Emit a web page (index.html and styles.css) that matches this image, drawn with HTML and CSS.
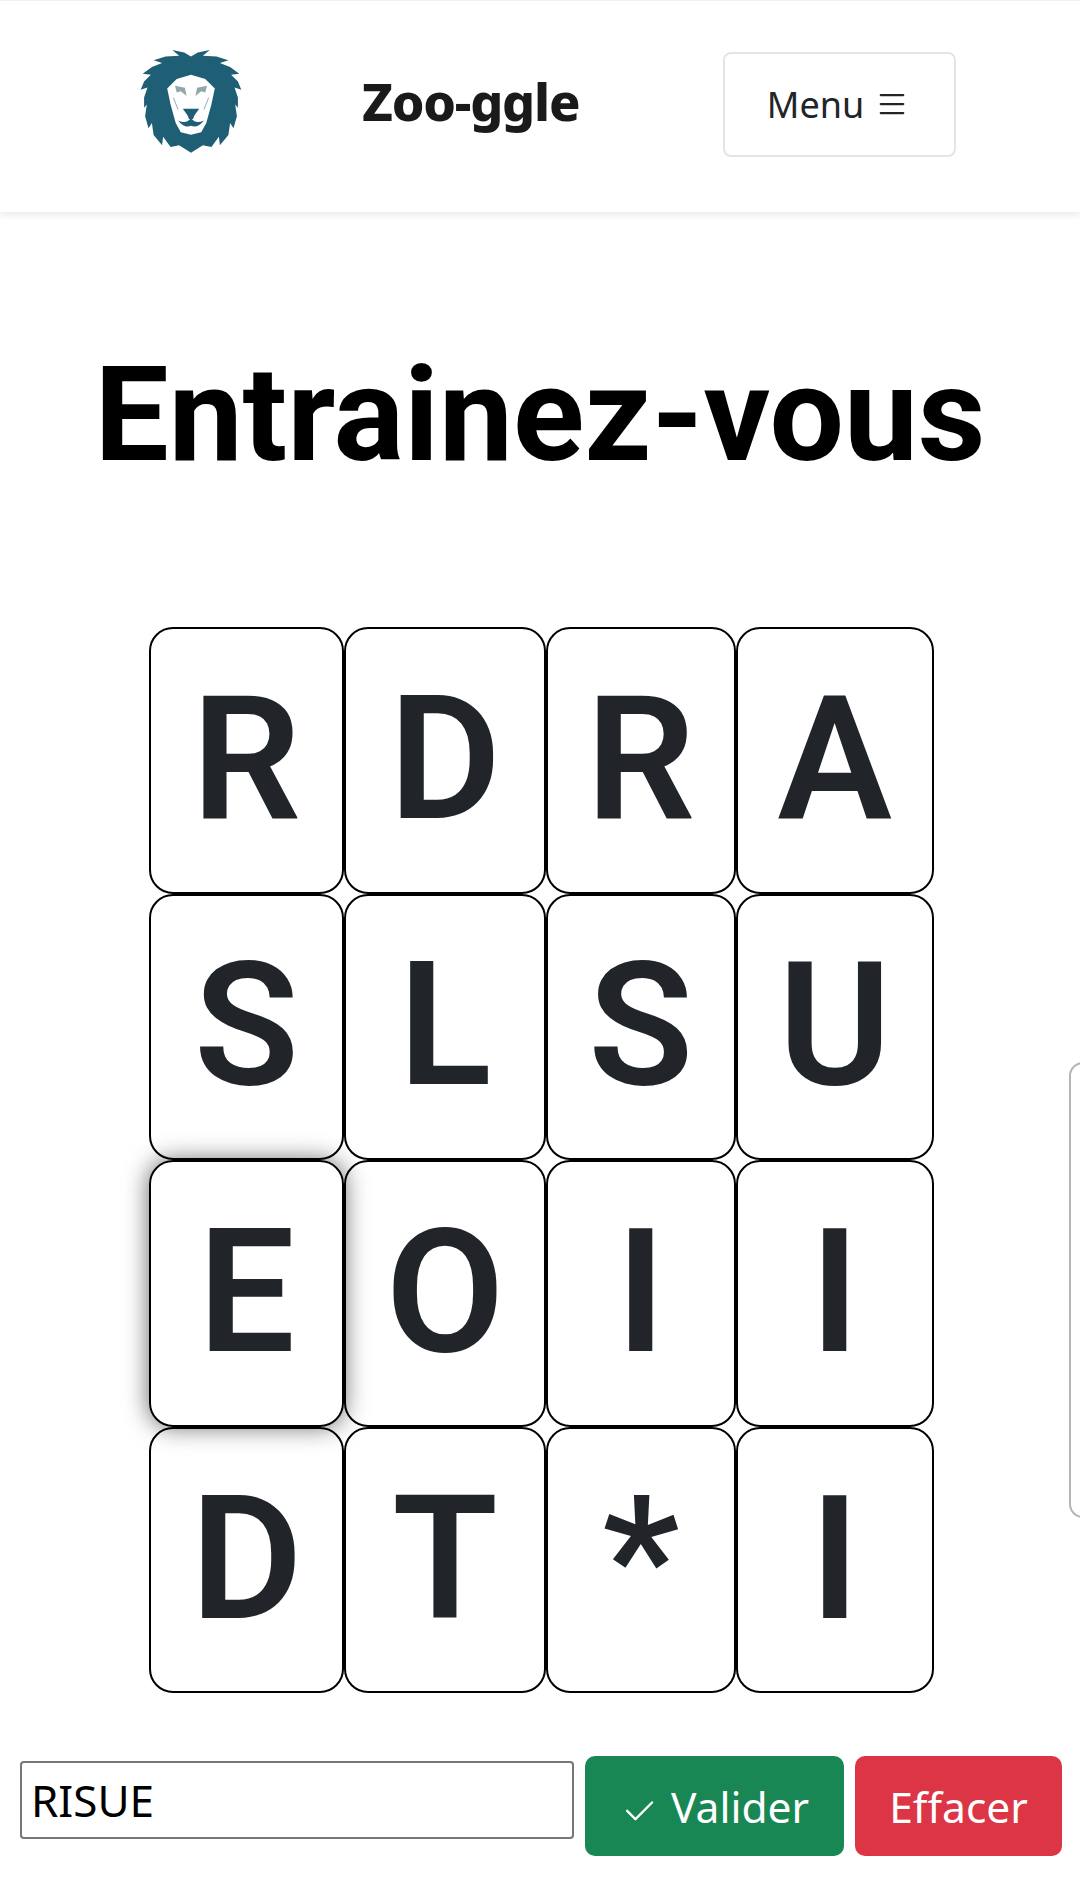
FILE: index.html
```html
<!DOCTYPE html>
<html>
<head>
  <title>Zoo-ggle</title>
  <link rel="stylesheet" href="styles.css">
</head>
<body>

  <header class="navbar">
    <svg class="logo" viewBox="60 60 300 310">
      <polygon class="mane" points="210,84 190,72 155,65 175,82 135,84 100,95 125,103 95,115 68,135 92,138 72,158 62,182 82,175 72,205 72,235 80,225 75,260 85,295 95,280 100,315 125,345 128,320 150,350 175,345 210,367 245,345 270,350 292,320 295,345 320,315 325,280 335,295 345,260 340,225 348,235 348,205 338,175 358,182 348,158 328,138 352,135 325,115 295,103 320,95 285,84 245,82 265,65 230,72"/>
      <polygon class="face" points="210,138 168,150 140,178 150,225 165,280 180,307 210,314 240,307 255,280 270,225 280,178 252,150"/>
      <polygon class="eye" points="163,170 192,176 197,200 180,186 168,190"/>
      <polygon class="eye" points="257,170 228,176 223,200 240,186 252,190"/>
      <polygon class="mane" points="186,238 234,238 220,258 216,268 204,268 200,258"/>
      <path class="mouth" d="M210 266 Q196 284 172 272 Q190 296 210 288 Q230 296 248 272 Q224 284 210 266 Z"/>
      <path class="whisker" d="M158 205 L172 240 M262 205 L248 240"/>
    </svg>
    <a class="brand" href="#">Zoo-ggle</a>
    <button class="menu-btn">Menu
      <svg class="menu-icon" viewBox="0 0 16 16"><path d="M2.5 12a.5.5 0 0 1 .5-.5h10a.5.5 0 0 1 0 1H3a.5.5 0 0 1-.5-.5zm0-4a.5.5 0 0 1 .5-.5h10a.5.5 0 0 1 0 1H3a.5.5 0 0 1-.5-.5zm0-4a.5.5 0 0 1 .5-.5h10a.5.5 0 0 1 0 1H3a.5.5 0 0 1-.5-.5z"/></svg>
    </button>
  </header>

  <h1>Entrainez-vous</h1>

  <div class="board">
    <div class="cell">R</div>
    <div class="cell">D</div>
    <div class="cell">R</div>
    <div class="cell">A</div>
    <div class="cell">S</div>
    <div class="cell">L</div>
    <div class="cell">S</div>
    <div class="cell">U</div>
    <div class="cell active">E</div>
    <div class="cell">O</div>
    <div class="cell">I</div>
    <div class="cell">I</div>
    <div class="cell">D</div>
    <div class="cell">T</div>
    <div class="cell">*</div>
    <div class="cell">I</div>
  </div>

  <form class="word-form">
    <input type="text" class="word-input" value="RISUE">
    <button type="button" class="btn btn-green">
      <svg class="check" viewBox="0 0 16 16"><path d="M13.854 3.646a.5.5 0 0 1 0 .708l-7 7a.5.5 0 0 1-.708 0l-3.5-3.5a.5.5 0 1 1 .708-.708L6.5 10.293l6.646-6.647a.5.5 0 0 1 .708 0z"/></svg>
      Valider
    </button>
    <button type="button" class="btn btn-red">Effacer</button>
  </form>

  <div class="side-panel"></div>

</body>
</html>
```

FILE: styles.css
```css
html, body {
  overflow-x: hidden;
}
body {
  margin: 0;
  background: #fff;
  color: #212529;
  font-family: "Noto Sans", sans-serif;
}

.navbar {
  display: flex;
  align-items: center;
  height: 206px;
  padding: 0 0 5px 140px;
  border-top: 1px solid #f0f0f0;
  box-shadow: 0 2px 8px rgba(0, 0, 0, .1);
}
.logo {
  flex: none;
  width: 102px;
  height: 106px;
  margin-bottom: 7px;
}
.mane {
  fill: #1f5f75;
}
.face {
  fill: #fff;
}
.eye {
  fill: #8fa8ab;
}
.mouth {
  fill: #1f5f75;
}
.whisker {
  fill: none;
  stroke: #9db4ba;
  stroke-width: 3;
}
.brand {
  flex: none;
  width: 361px;
  margin: 0 0 7px 120px;
  color: #1a1a1a;
  font-size: 52px;
  font-weight: 800;
  letter-spacing: -1.2px;
  text-decoration: none;
}
.menu-btn {
  display: flex;
  align-items: center;
  justify-content: center;
  gap: 10px;
  width: 233px;
  height: 105px;
  padding-right: 8px;
  background: #fff;
  border: 2px solid #e4e4e4;
  border-radius: 8px;
  color: #212529;
  font-family: inherit;
  font-size: 36px;
}
.menu-icon {
  width: 36px;
  height: 36px;
  fill: #212529;
}

h1 {
  margin: 128px 0 0;
  color: #000;
  font-family: Roboto, sans-serif;
  font-size: 132px;
  font-weight: 700;
  line-height: 150px;
  text-align: center;
}

.board {
  display: grid;
  grid-template-columns: 195px 202px 189.5px 198.5px;
  grid-auto-rows: 266.6px;
  margin: 137px 0 0 149px;
}
.cell {
  display: flex;
  align-items: center;
  justify-content: center;
  padding-bottom: 3px;
  border: 2px solid #000;
  border-radius: 24px;
  font-family: Roboto, sans-serif;
  font-size: 172px;
  font-weight: 580;
}
.active {
  box-shadow: 0 0 24px rgba(0, 0, 0, .6);
}

.word-form {
  display: flex;
  align-items: center;
  margin: 63px 0 0 20px;
}
.word-input {
  box-sizing: border-box;
  width: 554px;
  height: 78px;
  margin-bottom: 13px;
  padding: 0 9px;
  border: 2px solid #767676;
  border-radius: 4px;
  color: #000;
  font-family: "Noto Sans", sans-serif;
  font-size: 44px;
}
.btn {
  height: 100px;
  margin-left: 11px;
  border: none;
  border-radius: 10px;
  color: #fff;
  font-family: "Noto Sans", sans-serif;
  font-size: 42.5px;
}
.btn-green {
  width: 259px;
  background: #198754;
}
.btn-red {
  width: 207px;
  background: #dc3545;
}
.check {
  width: 38px;
  height: 38px;
  margin-right: 2px;
  fill: #fff;
  vertical-align: -8px;
}

.side-panel {
  position: absolute;
  top: 1062px;
  left: 1069px;
  width: 40px;
  height: 456px;
  border: 2px solid #b5b5b5;
  border-radius: 14px;
  box-sizing: border-box;
}
```
